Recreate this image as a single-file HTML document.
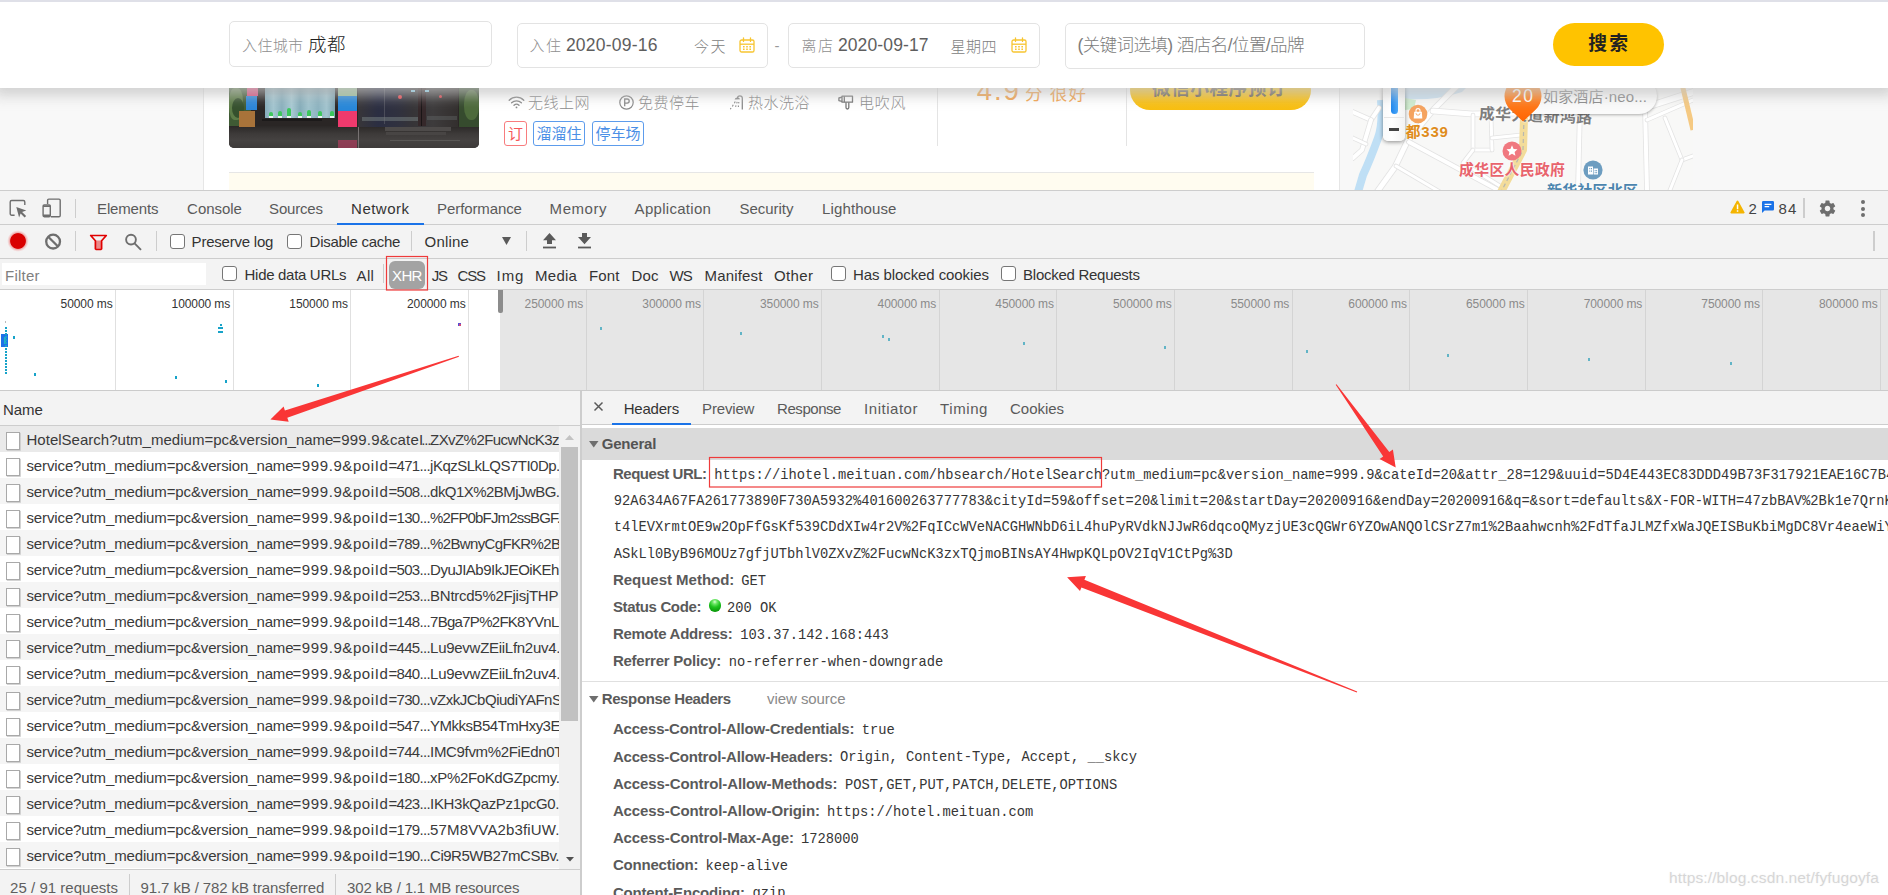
<!DOCTYPE html>
<html lang="zh"><head><meta charset="utf-8"><title>DevTools - Network</title>
<style>
*{margin:0;padding:0;box-sizing:border-box}
html,body{width:1888px;height:895px;overflow:hidden;background:#fff}
body{position:relative;font-family:"Liberation Sans","Noto Sans CJK SC",sans-serif}
.t{position:absolute;white-space:pre;display:block}
.b{position:absolute}
svg{position:absolute;overflow:visible}
.clip{position:absolute;overflow:hidden}
</style></head>
<body>
<!-- p_page -->
<div class="clip" style="left:0;top:0;width:1888px;height:190px;background:#f8f8f8">
<div class="b" style="left:203px;top:88px;width:1137px;height:102px;background:#fff;border-left:1px solid #e6e6e6;border-right:1px solid #e6e6e6"></div>
<div class="b" style="left:229px;top:172px;width:1085px;height:18px;background:#fffcf0;border-top:1px solid #e6e6e6"></div>
<div class="clip" style="left:229px;top:60px;width:250px;height:88px;border-radius:0 0 5px 5px;background:#383433">
<div class="b" style="left:-4px;top:0;width:258px;height:92px;filter:blur(.7px)"><div class="b" style="left:0.0px;top:0.0px;width:258px;height:68px;background:#2a2625;"></div><div class="b" style="left:0.0px;top:66.0px;width:258px;height:26px;background:linear-gradient(#2b2827,#3d3a39 30%,#454241 55%,#3a3736);"></div><div class="b" style="left:0.0px;top:26.0px;width:26px;height:40px;background:#3f5a34;"></div><div class="b" style="left:4.0px;top:28.0px;width:14px;height:32px;background:#5d7c48;border-radius:40%"></div><div class="b" style="left:7.0px;top:38.0px;width:12px;height:20px;background:#35502d;border-radius:50%"></div><div class="b" style="left:22.0px;top:26.0px;width:10.5px;height:9.6px;background:#dc4a7c;"></div><div class="b" style="left:20.7px;top:35.7px;width:11px;height:14.6px;background:#2b85d8;"></div><div class="b" style="left:13.8px;top:50.5px;width:16px;height:16px;background:#a8733a;"></div><div class="b" style="left:40.0px;top:26.0px;width:70.3px;height:32.3px;background:linear-gradient(90deg,#86acba,#a4c6d0 12%,#8ab0bd 24%,#a9cad3 38%,#86adba 50%,#a0c3cd 62%,#8db3c0 76%,#a3c5cf 88%,#7da3b1);"></div><div class="b" style="left:40.0px;top:26.0px;width:70.3px;height:10px;background:linear-gradient(rgba(70,90,100,.35),rgba(70,90,100,0));"></div><div class="b" style="left:44.0px;top:52.0px;width:4.2px;height:4px;background:#3cc75c;border-radius:2px 2px 0 0"></div><div class="b" style="left:44.3px;top:55.8px;width:3.6px;height:2.3px;background:#eef4f2;"></div><div class="b" style="left:53.0px;top:50.5px;width:4.2px;height:5.5px;background:#3cc75c;border-radius:2px 2px 0 0"></div><div class="b" style="left:53.3px;top:55.8px;width:3.6px;height:2.3px;background:#eef4f2;"></div><div class="b" style="left:62.0px;top:48.0px;width:4.2px;height:8px;background:#3cc75c;border-radius:2px 2px 0 0"></div><div class="b" style="left:62.3px;top:55.8px;width:3.6px;height:2.3px;background:#eef4f2;"></div><div class="b" style="left:73.0px;top:52.0px;width:4.2px;height:4px;background:#3cc75c;border-radius:2px 2px 0 0"></div><div class="b" style="left:73.3px;top:55.8px;width:3.6px;height:2.3px;background:#eef4f2;"></div><div class="b" style="left:82.0px;top:49.5px;width:4.2px;height:6.5px;background:#3cc75c;border-radius:2px 2px 0 0"></div><div class="b" style="left:82.3px;top:55.8px;width:3.6px;height:2.3px;background:#eef4f2;"></div><div class="b" style="left:93.0px;top:51.0px;width:4.2px;height:5px;background:#3cc75c;border-radius:2px 2px 0 0"></div><div class="b" style="left:93.3px;top:55.8px;width:3.6px;height:2.3px;background:#eef4f2;"></div><div class="b" style="left:105.0px;top:51.0px;width:4.2px;height:5px;background:#3cc75c;border-radius:2px 2px 0 0"></div><div class="b" style="left:105.3px;top:55.8px;width:3.6px;height:2.3px;background:#eef4f2;"></div><div class="b" style="left:37.0px;top:58.5px;width:60px;height:2.6px;background:#1c1a1a;"></div><div class="b" style="left:113.2px;top:26.0px;width:19.3px;height:10.3px;background:#9dc09a;"></div><div class="b" style="left:113.2px;top:36.3px;width:19.3px;height:15px;background:#2787d9;"></div><div class="b" style="left:113.2px;top:51.3px;width:19.3px;height:15.3px;background:#ef3a6d;"></div><div class="b" style="left:113.2px;top:79.5px;width:19.3px;height:9px;background:rgba(215,60,105,.5);"></div><div class="b" style="left:132.5px;top:26.0px;width:0.8px;height:64px;background:#777272;"></div><div class="b" style="left:133.3px;top:26.0px;width:100px;height:40.5px;background:linear-gradient(90deg,#383639,#2b2e42 20%,#30313f 40%,#363437 55%,#3d3b3c 75%,#332f2e);"></div><div class="b" style="left:137.0px;top:56.5px;width:56px;height:4px;background:rgba(120,130,130,.5);"></div><div class="b" style="left:202.0px;top:56.0px;width:30px;height:4px;background:rgba(110,115,115,.35);"></div><div class="b" style="left:192.8px;top:26.0px;width:8.2px;height:39.5px;background:#35282a;"></div><div class="b" style="left:196.0px;top:26.0px;width:1.2px;height:39.5px;background:#1a1516;"></div><div class="b" style="left:159.0px;top:28.0px;width:1px;height:36px;background:rgba(120,120,125,.4);"></div><div class="b" style="left:186.0px;top:30.2px;width:3.8px;height:1.8px;background:#86d4ee;"></div><div class="b" style="left:199.7px;top:30.2px;width:4.2px;height:1.8px;background:#86d4ee;"></div><div class="b" style="left:172.8px;top:34.5px;width:4.4px;height:4.4px;background:#ea4a50;border-radius:50%"></div><div class="b" style="left:214.0px;top:34.8px;width:3.2px;height:3.2px;background:#dd424c;border-radius:50%"></div><div class="b" style="left:233.5px;top:26.0px;width:25px;height:41px;background:#364b2e;"></div><div class="b" style="left:239.0px;top:30.0px;width:15px;height:30px;background:#4d6a3b;border-radius:45%"></div><div class="b" style="left:159.8px;top:66.5px;width:66px;height:4.5px;background:#4e4b4a;"></div><div class="b" style="left:161.0px;top:72.0px;width:60px;height:3px;background:#484544;"></div><div class="b" style="left:165.0px;top:80.0px;width:70px;height:1px;background:rgba(110,108,106,.5);"></div></div>
</div>
<svg style="left:508px;top:95px" width="17" height="14" viewBox="0 0 17 14" fill="none" stroke="#8a8a8a" stroke-width="1.3" stroke-linecap="round"><path d="M1.2 5.2a10.3 10.3 0 0 1 14.6 0"/><path d="M3.6 7.8a7 7 0 0 1 9.8 0"/><path d="M6 10.3a3.6 3.6 0 0 1 5 0"/><circle cx="8.5" cy="12.4" r=".9" fill="#8a8a8a" stroke="none"/></svg>
<span class="t" style="left:528.1px;top:95.3px;font:300 15px/1 'Liberation Sans','Noto Sans CJK SC',sans-serif;color:#8c8c8c;letter-spacing:0.448px;">无线上网</span>
<svg style="left:619px;top:95px" width="15" height="15" viewBox="0 0 15 15" fill="none" stroke="#8a8a8a" stroke-width="1.2"><circle cx="7.5" cy="7.5" r="6.7"/><path d="M5.7 11.2V4h2.4a2.1 2.1 0 0 1 0 4.2H5.7" stroke-width="1.3"/></svg>
<span class="t" style="left:638.1px;top:95.3px;font:300 15px/1 'Liberation Sans','Noto Sans CJK SC',sans-serif;color:#8c8c8c;letter-spacing:0.448px;">免费停车</span>
<svg style="left:729px;top:95px" width="15" height="15" viewBox="0 0 15 15" fill="none" stroke="#8a8a8a" stroke-width="1.3"><path d="M13.3 14.5V3.2a2.4 2.4 0 0 0-4.8 0"/><path d="M5.6 4.6a3 3 0 0 1 5.6-.4z" fill="#8a8a8a" stroke="none"/><path d="M6.2 6.6l-.8 1.6M4.2 9.8l-.8 1.6M2 13l-.6 1.2M8.2 6.8l-.5 1.6M7 10.4l-.4 1.5M9.8 7l-.1 1.4M9.4 10.6V12" stroke-width="1.1"/></svg>
<span class="t" style="left:748.1px;top:95.3px;font:300 15px/1 'Liberation Sans','Noto Sans CJK SC',sans-serif;color:#8c8c8c;letter-spacing:0.448px;">热水洗浴</span>
<svg style="left:838px;top:95px" width="16" height="15" viewBox="0 0 16 15" fill="none" stroke="#777" stroke-width="1.3" stroke-linejoin="round"><path d="M4 1.2h10.5v6H4z"/><path d="M4 2.2L.9 3v2.6L4 6.4"/><path d="M8 7.2v5.4a1.4 1.4 0 0 0 2.8 0V7.2"/><path d="M6.3 1.2v6"/></svg>
<span class="t" style="left:859.1px;top:95.3px;font:300 15px/1 'Liberation Sans','Noto Sans CJK SC',sans-serif;color:#8c8c8c;letter-spacing:0.672px;">电吹风</span>
<div class="b" style="left:504px;top:121px;width:23px;height:25px;border:1px solid #f87c7e;border-radius:3px"></div>
<span class="t" style="left:508.0px;top:126.3px;font:400 15px/1 'Liberation Sans','Noto Sans CJK SC',sans-serif;color:#f6575a;letter-spacing:0.044px;">订</span>
<div class="b" style="left:533px;top:121px;width:52px;height:25px;border:1px solid #5d9cec;border-radius:3px"></div>
<span class="t" style="left:536.5px;top:126.3px;font:400 15px/1 'Liberation Sans','Noto Sans CJK SC',sans-serif;color:#4b8fe6;letter-spacing:0.022px;">溜溜住</span>
<div class="b" style="left:592px;top:121px;width:52px;height:25px;border:1px solid #5d9cec;border-radius:3px"></div>
<span class="t" style="left:595.5px;top:126.3px;font:400 15px/1 'Liberation Sans','Noto Sans CJK SC',sans-serif;color:#4b8fe6;letter-spacing:0.022px;">停车场</span>
<div class="b" style="left:937px;top:88px;width:1px;height:58px;background:#e4e4e4"></div>
<div class="b" style="left:1126px;top:88px;width:1px;height:58px;background:#e4e4e4"></div>
<span class="t" style="left:976.8px;top:77.2px;font:400 27.5px/1 'Liberation Sans','Noto Sans CJK SC',sans-serif;color:#f3a24a;letter-spacing:1.838px;">4.9</span>
<span class="t" style="left:1024.9px;top:86.2px;font:400 17.5px/1 'Liberation Sans','Noto Sans CJK SC',sans-serif;color:#f3a24a;letter-spacing:1.265px;">分 很好</span>
<div class="b" style="left:1130px;top:70px;width:181px;height:40px;border-radius:20px;background:linear-gradient(#fdd23a,#f9c21a 60%,#f8be10)"></div>
<span class="t" style="left:1151.8px;top:80.1px;font:700 18.75px/1 'Liberation Sans','Noto Sans CJK SC',sans-serif;color:#6a6052;letter-spacing:0.429px;">微信小程序预订</span>
<div class="clip" style="left:1353px;top:60px;width:340px;height:130px;background:#f8f8f7">
<svg style="left:0;top:0" width="340" height="130" viewBox="1353 60 340 130">
<path d="M1404 84 L1470 84 L1462 92 Q1435 101 1404 99z" fill="#cbe1f1"/><path d="M1405 98l11 2-2 9-9 1z" fill="#cfeccf"/><path d="M1381 100 Q1383 125 1378 138 Q1370 160 1363 175 L1358 192" fill="none" stroke="#bfdff5" stroke-width="8"/><path d="M1353 112L1371 120L1379 108" fill="none" stroke="#e3e3e3" stroke-width="5.6" stroke-linecap="round" stroke-linejoin="round"/><path d="M1353 112L1371 120L1379 108" fill="none" stroke="#fff" stroke-width="4" stroke-linecap="round" stroke-linejoin="round"/><path d="M1371 120L1362 150L1353 158" fill="none" stroke="#e3e3e3" stroke-width="5.6" stroke-linecap="round" stroke-linejoin="round"/><path d="M1371 120L1362 150L1353 158" fill="none" stroke="#fff" stroke-width="4" stroke-linecap="round" stroke-linejoin="round"/><path d="M1353 138L1366 144" fill="none" stroke="#e3e3e3" stroke-width="4.6" stroke-linecap="round" stroke-linejoin="round"/><path d="M1353 138L1366 144" fill="none" stroke="#fff" stroke-width="3" stroke-linecap="round" stroke-linejoin="round"/><path d="M1457 86L1433 110L1407 142L1395 167L1377 192" fill="none" stroke="#e3e3e3" stroke-width="6.6" stroke-linecap="round" stroke-linejoin="round"/><path d="M1457 86L1433 110L1407 142L1395 167L1377 192" fill="none" stroke="#fff" stroke-width="5" stroke-linecap="round" stroke-linejoin="round"/><path d="M1433 111L1472 114L1520 113" fill="none" stroke="#e3e3e3" stroke-width="6.6" stroke-linecap="round" stroke-linejoin="round"/><path d="M1433 111L1472 114L1520 113" fill="none" stroke="#fff" stroke-width="5" stroke-linecap="round" stroke-linejoin="round"/><path d="M1409 142L1498 190" fill="none" stroke="#e3e3e3" stroke-width="5.6" stroke-linecap="round" stroke-linejoin="round"/><path d="M1409 142L1498 190" fill="none" stroke="#fff" stroke-width="4" stroke-linecap="round" stroke-linejoin="round"/><path d="M1396 166L1440 192" fill="none" stroke="#e3e3e3" stroke-width="4.6" stroke-linecap="round" stroke-linejoin="round"/><path d="M1396 166L1440 192" fill="none" stroke="#fff" stroke-width="3" stroke-linecap="round" stroke-linejoin="round"/><path d="M1473 115L1473 150L1492 150" fill="none" stroke="#e3e3e3" stroke-width="4.6" stroke-linecap="round" stroke-linejoin="round"/><path d="M1473 115L1473 150L1492 150" fill="none" stroke="#fff" stroke-width="3" stroke-linecap="round" stroke-linejoin="round"/><path d="M1491 115L1492 150" fill="none" stroke="#e3e3e3" stroke-width="4.6" stroke-linecap="round" stroke-linejoin="round"/><path d="M1491 115L1492 150" fill="none" stroke="#fff" stroke-width="3" stroke-linecap="round" stroke-linejoin="round"/><path d="M1492 138L1521 135" fill="none" stroke="#e3e3e3" stroke-width="4.6" stroke-linecap="round" stroke-linejoin="round"/><path d="M1492 138L1521 135" fill="none" stroke="#fff" stroke-width="3" stroke-linecap="round" stroke-linejoin="round"/><path d="M1473 150L1463 163L1500 186" fill="none" stroke="#e3e3e3" stroke-width="4.6" stroke-linecap="round" stroke-linejoin="round"/><path d="M1473 150L1463 163L1500 186" fill="none" stroke="#fff" stroke-width="3" stroke-linecap="round" stroke-linejoin="round"/><path d="M1524 112L1580 109L1650 106L1693 92" fill="none" stroke="#e3e3e3" stroke-width="7.6" stroke-linecap="round" stroke-linejoin="round"/><path d="M1524 112L1580 109L1650 106L1693 92" fill="none" stroke="#fff" stroke-width="6" stroke-linecap="round" stroke-linejoin="round"/><path d="M1580 108L1578 190" fill="none" stroke="#e3e3e3" stroke-width="5.6" stroke-linecap="round" stroke-linejoin="round"/><path d="M1580 108L1578 190" fill="none" stroke="#fff" stroke-width="4" stroke-linecap="round" stroke-linejoin="round"/><path d="M1645 108L1647 190" fill="none" stroke="#e3e3e3" stroke-width="5.6" stroke-linecap="round" stroke-linejoin="round"/><path d="M1645 108L1647 190" fill="none" stroke="#fff" stroke-width="4" stroke-linecap="round" stroke-linejoin="round"/><path d="M1647 120L1693 100" fill="none" stroke="#e3e3e3" stroke-width="4.6" stroke-linecap="round" stroke-linejoin="round"/><path d="M1647 120L1693 100" fill="none" stroke="#fff" stroke-width="3" stroke-linecap="round" stroke-linejoin="round"/><path d="M1665 118L1682 160L1693 156" fill="none" stroke="#e3e3e3" stroke-width="4.6" stroke-linecap="round" stroke-linejoin="round"/><path d="M1665 118L1682 160L1693 156" fill="none" stroke="#fff" stroke-width="3" stroke-linecap="round" stroke-linejoin="round"/><path d="M1682 160L1670 190" fill="none" stroke="#e3e3e3" stroke-width="4.6" stroke-linecap="round" stroke-linejoin="round"/><path d="M1682 160L1670 190" fill="none" stroke="#fff" stroke-width="3" stroke-linecap="round" stroke-linejoin="round"/><path d="M1600 88L1592 108" fill="none" stroke="#e3e3e3" stroke-width="4.6" stroke-linecap="round" stroke-linejoin="round"/><path d="M1600 88L1592 108" fill="none" stroke="#fff" stroke-width="3" stroke-linecap="round" stroke-linejoin="round"/><path d="M1682 84L1693 130" fill="none" stroke="#f5c982" stroke-width="5"/><path d="M1524 118L1523 150L1501 192" fill="none" stroke="#f3dc9a" stroke-width="8" stroke-linejoin="round"/><path d="M1524 118L1523 150L1501 192" fill="none" stroke="#b8b8b0" stroke-width="1.2" stroke-dasharray="4 3" stroke-linejoin="round"/>
</svg>
</div>
<span class="t" style="left:1479.0px;top:106.1px;font:700 15.8px/1 'Liberation Sans','Noto Sans CJK SC',sans-serif;color:#7d7d7d;letter-spacing:0.394px;transform:rotate(2.2deg);transform-origin:0 50%;text-shadow:0 0 2px #fff,0 0 2px #fff;">成华大道新鸿路</span>
<div class="b" style="left:1383px;top:60px;width:22px;height:81px;background:linear-gradient(90deg,#fafafa,#fff 40%,#f3f3f3);border-radius:0 0 5px 5px;box-shadow:0 1px 4px rgba(0,0,0,.45)"></div>
<div class="b" style="left:1390.5px;top:60px;width:7.5px;height:53.5px;background:linear-gradient(90deg,#1d86ee,#4aa6f7);border-radius:0 0 4px 4px"></div>
<div class="b" style="left:1384px;top:117px;width:20px;height:1px;background:#e6e6e6"></div>
<div class="b" style="left:1389px;top:127.5px;width:10px;height:3px;background:#444"></div>
<svg style="left:1408px;top:104px" width="20" height="20" viewBox="0 0 20 20"><circle cx="10" cy="10" r="9.3" fill="#f5a35f"/><path d="M6.2 7.8h7.6l.5 6.6H5.7z" fill="#fff"/><path d="M8 8V6.6a2 2 0 0 1 4 0V8" fill="none" stroke="#fff" stroke-width="1.1"/><path d="M8 9.2a2 2 0 0 0 4 0" fill="none" stroke="#f5a35f" stroke-width=".9"/></svg>
<span class="t" style="left:1405.6px;top:124.3px;font:700 15px/1 'Liberation Sans','Noto Sans CJK SC',sans-serif;color:#df8c1c;letter-spacing:0.776px;text-shadow:0 0 2px #fff;">都339</span>
<div class="b" style="left:1520px;top:78px;width:137px;height:36px;background:#fafafa;border-radius:0 18px 18px 0;box-shadow:0 1px 3px rgba(0,0,0,.3)"></div>
<span class="t" style="left:1543.1px;top:89.3px;font:400 15px/1 'Liberation Sans','Noto Sans CJK SC',sans-serif;color:#8a8a8a;letter-spacing:0.133px;">如家酒店·neo...</span>
<div class="b" style="left:1503px;top:76px;width:40px;height:47px;background:linear-gradient(#ff9a3c,#ff6200);clip-path:path('M20 45.600L7.200 33.400A18.500 18.500 0 1 1 32.800 33.400z')"></div>
<span class="t" style="left:1511.9px;top:87.7px;font:400 17.5px/1 'Liberation Sans','Noto Sans CJK SC',sans-serif;color:#fff;letter-spacing:1.701px;">20</span>
<svg style="left:1502px;top:141px" width="20" height="20" viewBox="0 0 20 20"><circle cx="10" cy="10" r="9.5" fill="#f0787f"/><path d="M10 4.3l1.6 3.6 3.9.4-2.9 2.6.8 3.8L10 12.800 6.600 14.700l.8-3.800L4.500 8.300l3.900-.4z" fill="#fff"/></svg>
<span class="t" style="left:1459.1px;top:162.5px;font:700 14.8px/1 'Liberation Sans','Noto Sans CJK SC',sans-serif;color:#e8646d;letter-spacing:0.374px;text-shadow:0 0 2px #fff,0 0 2px #fff;">成华区人民政府</span>
<svg style="left:1583px;top:160px" width="20" height="20" viewBox="0 0 20 20"><circle cx="10" cy="10" r="9.600" fill="#6d9dc0"/><path d="M5 14.500V6.500h5v8zM10.600 14.500V8.500h4.400v6z" fill="#fff"/><path d="M6.300 8h1v1.300h-1zM8 8h1v1.300H8zM6.300 10.400h1v1.300h-1zM8 10.400h1v1.300H8zM11.700 10h.9v1.200h-.9zM13.200 10h.9v1.200h-.9zM11.700 12h.9v1.200h-.9zM13.200 12h.9v1.200h-.9z" fill="#6d9dc0"/></svg>
<span class="t" style="left:1547.1px;top:182.8px;font:700 15px/1 'Liberation Sans','Noto Sans CJK SC',sans-serif;color:#4b85ae;letter-spacing:0.169px;text-shadow:0 0 2px #fff;">新华社区北区</span>
</div>
<div class="b" style="left:0px;top:0px;width:1888px;height:88px;background:#fff;box-shadow:0 2px 12px 6px rgba(195,195,195,.7)"></div>
<div class="b" style="left:0px;top:0px;width:1888px;height:2px;background:#dfe0e8"></div>
<div class="b" style="left:229px;top:21px;width:263px;height:46px;border:1px solid #e3e3e3;border-radius:5px;background:#fff"></div>
<div class="b" style="left:517px;top:23px;width:251px;height:45px;border:1px solid #e3e3e3;border-radius:5px;background:#fff"></div>
<div class="b" style="left:788px;top:23px;width:252px;height:45px;border:1px solid #e3e3e3;border-radius:5px;background:#fff"></div>
<div class="b" style="left:1065px;top:23px;width:300px;height:46px;border:1px solid #e3e3e3;border-radius:5px;background:#fff"></div>
<span class="t" style="left:242.1px;top:37.9px;font:300 15px/1 'Liberation Sans','Noto Sans CJK SC',sans-serif;color:#8f8f8f;letter-spacing:0.315px;">入住城市</span>
<span class="t" style="left:308.0px;top:36.4px;font:300 18.4px/1 'Liberation Sans','Noto Sans CJK SC',sans-serif;color:#1e1e1e;letter-spacing:0.485px;">成都</span>
<span class="t" style="left:529.6px;top:38.1px;font:300 15px/1 'Liberation Sans','Noto Sans CJK SC',sans-serif;color:#8f8f8f;letter-spacing:1.344px;">入住</span>
<span class="t" style="left:565.9px;top:36.7px;font:400 17.5px/1 'Liberation Sans','Noto Sans CJK SC',sans-serif;color:#5e5e5e;letter-spacing:0.238px;">2020-09-16</span>
<span class="t" style="left:694.1px;top:39.3px;font:300 15px/1 'Liberation Sans','Noto Sans CJK SC',sans-serif;color:#808080;letter-spacing:1.344px;">今天</span>
<span class="t" style="left:774.6px;top:38.3px;font:400 15px/1 'Liberation Sans','Noto Sans CJK SC',sans-serif;color:#999;letter-spacing:2.360px;">-</span>
<span class="t" style="left:801.6px;top:38.1px;font:300 15px/1 'Liberation Sans','Noto Sans CJK SC',sans-serif;color:#8f8f8f;letter-spacing:1.344px;">离店</span>
<span class="t" style="left:837.9px;top:36.7px;font:400 17.5px/1 'Liberation Sans','Noto Sans CJK SC',sans-serif;color:#5e5e5e;letter-spacing:0.127px;">2020-09-17</span>
<span class="t" style="left:950.6px;top:39.3px;font:300 15px/1 'Liberation Sans','Noto Sans CJK SC',sans-serif;color:#808080;letter-spacing:0.422px;">星期四</span>
<span class="t" style="left:1077.4px;top:37.2px;font:300 17.5px/1 'Liberation Sans','Noto Sans CJK SC',sans-serif;color:#7c7c7c;letter-spacing:-0.568px;">(关键词选填) 酒店名/位置/品牌</span>
<svg style="left:739px;top:37px" width="16" height="16" viewBox="0 0 16 16" fill="none" stroke="#f7c531" stroke-width="1.3"><rect x="1" y="3" width="14" height="12" rx="1.6"/><path d="M1 7.200h14" /><path d="M4.500 .8v3.600M11.500 .8v3.600" stroke-linecap="round"/><path d="M4 9.800h1.600M7.200 9.800h1.600M10.400 9.800h1.600M4 12.300h1.600M7.200 12.300h1.600M10.400 12.300h1.600" stroke-width="1.400"/></svg>
<svg style="left:1011px;top:37px" width="16" height="16" viewBox="0 0 16 16" fill="none" stroke="#f7c531" stroke-width="1.3"><rect x="1" y="3" width="14" height="12" rx="1.6"/><path d="M1 7.200h14" /><path d="M4.500 .8v3.600M11.500 .8v3.600" stroke-linecap="round"/><path d="M4 9.800h1.600M7.200 9.800h1.600M10.400 9.800h1.600M4 12.300h1.600M7.200 12.300h1.600M10.400 12.300h1.600" stroke-width="1.400"/></svg>
<div class="b" style="left:1553px;top:23px;width:111px;height:43px;background:#ffc300;border-radius:22px"></div>
<span class="t" style="left:1588.3px;top:34.6px;font:700 18.75px/1 'Liberation Sans','Noto Sans CJK SC',sans-serif;color:#222;letter-spacing:2.325px;">搜索</span>
<!-- p_toolbar -->
<div class="b" style="left:0px;top:190px;width:1888px;height:100px;background:#f3f3f3"></div>
<div class="b" style="left:0px;top:190px;width:1888px;height:1px;background:#cdcdcd"></div>
<div class="b" style="left:0px;top:224px;width:1888px;height:1px;background:#cdcdcd"></div>
<div class="b" style="left:0px;top:258px;width:1888px;height:1px;background:#cdcdcd"></div>
<div class="b" style="left:0px;top:289px;width:1888px;height:1px;background:#cdcdcd"></div>
<svg style="left:9px;top:199px" width="19" height="19" viewBox="9 199 19 19" fill="none" stroke="#6e6e6e" stroke-width="1.400"><path d="M14.600 215.300H11.700a1.500 1.500 0 0 1-1.500-1.500v-11.800a1.500 1.500 0 0 1 1.500-1.500h11.600a1.500 1.500 0 0 1 1.500 1.500v3.100"/><path d="M16.300 206.900l10 3.500-4.200 1.500 4 4-1.500 1.500-4-4-1.500 4.200z" fill="#6e6e6e" stroke="none"/></svg>
<svg style="left:42px;top:198px" width="20" height="20" viewBox="42 198 20 20" fill="none" stroke="#6e6e6e" stroke-width="1.400"><path d="M47.600 204V200.300a1.200 1.200 0 0 1 1.200-1.200h10.200a1.200 1.200 0 0 1 1.200 1.200v15.200a1.200 1.200 0 0 1-1.200 1.200h-8.200"/><rect x="43.100" y="204.900" width="7.200" height="11.800" rx="1.100"/><path d="M43.100 206.200h7.200M43.100 215.400h7.200" stroke-width="1.800"/></svg>
<div class="b" style="left:75px;top:199px;width:1px;height:19px;background:#cdcdcd"></div>
<span class="t" style="left:97.1px;top:201.3px;font:400 15px/1 'Liberation Sans','Noto Sans CJK SC',sans-serif;color:#5a5a5a;letter-spacing:-0.167px;">Elements</span>
<span class="t" style="left:187.1px;top:201.3px;font:400 15px/1 'Liberation Sans','Noto Sans CJK SC',sans-serif;color:#5a5a5a;letter-spacing:-0.031px;">Console</span>
<span class="t" style="left:269.1px;top:201.3px;font:400 15px/1 'Liberation Sans','Noto Sans CJK SC',sans-serif;color:#5a5a5a;letter-spacing:-0.195px;">Sources</span>
<span class="t" style="left:351.1px;top:201.3px;font:400 15px/1 'Liberation Sans','Noto Sans CJK SC',sans-serif;color:#333;letter-spacing:0.474px;">Network</span>
<span class="t" style="left:437.1px;top:201.3px;font:400 15px/1 'Liberation Sans','Noto Sans CJK SC',sans-serif;color:#5a5a5a;letter-spacing:-0.102px;">Performance</span>
<span class="t" style="left:549.6px;top:201.3px;font:400 15px/1 'Liberation Sans','Noto Sans CJK SC',sans-serif;color:#5a5a5a;letter-spacing:0.538px;">Memory</span>
<span class="t" style="left:634.6px;top:201.3px;font:400 15px/1 'Liberation Sans','Noto Sans CJK SC',sans-serif;color:#5a5a5a;letter-spacing:0.297px;">Application</span>
<span class="t" style="left:739.6px;top:201.3px;font:400 15px/1 'Liberation Sans','Noto Sans CJK SC',sans-serif;color:#5a5a5a;letter-spacing:-0.047px;">Security</span>
<span class="t" style="left:822.1px;top:201.3px;font:400 15px/1 'Liberation Sans','Noto Sans CJK SC',sans-serif;color:#5a5a5a;letter-spacing:0.106px;">Lighthouse</span>
<div class="b" style="left:337px;top:223px;width:87px;height:2px;background:#1a73e8"></div>
<svg style="left:1730px;top:200px" width="15" height="14" viewBox="0 0 15 14"><path d="M7.500 .6a.9.900 0 0 1 .8.450l6.200 11.100a.9.900 0 0 1-.8 1.350H1.300a.9.900 0 0 1-.8-1.350L6.700 1.050A.9.900 0 0 1 7.500.6z" fill="#f4b400"/><path d="M6.800 4.400h1.500v4.800H6.800zM6.800 10.300h1.500v1.500H6.800z" fill="#fff"/></svg>
<span class="t" style="left:1748.6px;top:201.3px;font:400 15px/1 'Liberation Sans','Noto Sans CJK SC',sans-serif;color:#444;letter-spacing:0.516px;">2</span>
<svg style="left:1762px;top:201px" width="12" height="12" viewBox="0 0 12 12"><path d="M1.600 0h9.200A1.200 1.200 0 0 1 12 1.200v7a1.200 1.200 0 0 1-1.200 1.200H2.600L0 12V1.200A1.200 1.200 0 0 1 1.200 0z" fill="#1a73e8"/><path d="M2.600 2.700h6.800v1.200H2.600zM2.600 5h4.600v1.200H2.600z" fill="#fff"/></svg>
<span class="t" style="left:1778.6px;top:201.3px;font:400 15px/1 'Liberation Sans','Noto Sans CJK SC',sans-serif;color:#444;letter-spacing:1.172px;">84</span>
<div class="b" style="left:1803px;top:198px;width:2px;height:20px;background:#cdcdcd"></div>
<svg style="left:1818px;top:199px" width="19" height="19" viewBox="0 0 24 24"><path fill="#6e6e6e" d="M19.430 12.980c.040-.320.070-.640.070-.980s-.030-.660-.070-.980l2.110-1.650c.190-.150.240-.420.120-.640l-2-3.460c-.120-.220-.390-.300-.610-.220l-2.490 1c-.520-.400-1.080-.730-1.690-.980l-.380-2.650A.488.488 0 0 0 14 2h-4c-.250 0-.460.180-.490.420l-.380 2.650c-.610.250-1.170.590-1.690.980l-2.490-1c-.230-.090-.490 0-.610.220l-2 3.460c-.130.220-.070.490.120.640l2.110 1.650c-.040.320-.070.650-.070.980s.030.660.070.980l-2.110 1.650c-.190.150-.240.420-.120.640l2 3.460c.120.220.390.300.610.220l2.490-1c.520.400 1.080.730 1.690.980l.380 2.650c.030.240.240.420.490.420h4c.250 0 .460-.180.490-.420l.380-2.650c.610-.250 1.170-.590 1.690-.980l2.490 1c.230.090.490 0 .610-.220l2-3.460c.120-.220.070-.490-.120-.640l-2.110-1.650zM12 15.500c-1.930 0-3.500-1.570-3.500-3.500s1.570-3.500 3.500-3.500 3.500 1.570 3.500 3.500-1.570 3.500-3.500 3.500z"/></svg>
<div class="b" style="left:1861px;top:200.4px;width:4px;height:4px;background:#6e6e6e;border-radius:50%"></div>
<div class="b" style="left:1861px;top:206.5px;width:4px;height:4px;background:#6e6e6e;border-radius:50%"></div>
<div class="b" style="left:1861px;top:212.6px;width:4px;height:4px;background:#6e6e6e;border-radius:50%"></div>
<div class="b" style="left:6.5px;top:230.2px;width:22px;height:22px;border-radius:50%;background:radial-gradient(circle,#d90000 0,#d90000 7.400px,rgba(235,60,60,.4) 8.300px,rgba(240,90,90,.18) 9.600px,rgba(240,90,90,0) 10.800px)"></div>
<svg style="left:44px;top:232px" width="19" height="19" viewBox="44 232 19 19" fill="none" stroke="#6e6e6e" stroke-width="2.300"><circle cx="53.100" cy="241.600" r="6.900"/><path d="M48.200 236.700l9.800 9.800"/></svg>
<div class="b" style="left:75px;top:231px;width:1px;height:20px;background:#cdcdcd"></div>
<svg style="left:89px;top:234px" width="19" height="17" viewBox="89 234 19 17"><path d="M95.400 240.600h6.200v8.200l-1 .6h-4.200l-1-.6z" fill="#ea8a8a"/><path d="M90.700 235.500h15.600l-4.700 5.300v8l-1 .7h-4.200l-1-.7v-8z" fill="none" stroke="#e00000" stroke-width="1.700" stroke-linejoin="round"/></svg>
<svg style="left:124px;top:233px" width="19" height="19" viewBox="124 233 19 19" fill="none" stroke="#6e6e6e" stroke-width="1.900"><circle cx="131" cy="239.600" r="4.900"/><path d="M134.600 243.300l6.400 6.600"/></svg>
<div class="b" style="left:156px;top:231px;width:1px;height:20px;background:#cdcdcd"></div>
<div class="b" style="left:170px;top:234px;width:15px;height:15px;background:#fff;border:1.300px solid #767676;border-radius:3px"></div>
<span class="t" style="left:191.6px;top:233.8px;font:400 15px/1 'Liberation Sans','Noto Sans CJK SC',sans-serif;color:#333;letter-spacing:-0.214px;">Preserve log</span>
<div class="b" style="left:287px;top:234px;width:15px;height:15px;background:#fff;border:1.300px solid #767676;border-radius:3px"></div>
<span class="t" style="left:309.6px;top:233.8px;font:400 15px/1 'Liberation Sans','Noto Sans CJK SC',sans-serif;color:#333;letter-spacing:-0.280px;">Disable cache</span>
<div class="b" style="left:411px;top:231px;width:1px;height:20px;background:#cdcdcd"></div>
<span class="t" style="left:424.6px;top:233.8px;font:400 15px/1 'Liberation Sans','Noto Sans CJK SC',sans-serif;color:#333;letter-spacing:0.200px;">Online</span>
<svg style="left:502px;top:237px" width="9" height="8" viewBox="0 0 9 8"><path d="M0 0h9L4.500 8z" fill="#5a5a5a"/></svg>
<div class="b" style="left:526px;top:231px;width:1px;height:20px;background:#cdcdcd"></div>
<svg style="left:543px;top:233px" width="13" height="16" viewBox="0 0 13 16" fill="#5a5a5a"><path d="M6.500 0L13 7.200H9V11H4V7.200H0z"/><path d="M0 13.600h13v1.800H0z"/></svg>
<svg style="left:578px;top:233px" width="13" height="16" viewBox="0 0 13 16" fill="#5a5a5a"><path d="M6.500 11.200L13 4H9V0H4v4H0z"/><path d="M0 13.600h13v1.800H0z"/></svg>
<div class="b" style="left:1873px;top:231px;width:2px;height:20px;background:#cdcdcd"></div>
<div class="b" style="left:2px;top:263px;width:204px;height:22px;background:#fff"></div>
<span class="t" style="left:5.1px;top:267.6px;font:400 15px/1 'Liberation Sans','Noto Sans CJK SC',sans-serif;color:#808080;letter-spacing:0.203px;">Filter</span>
<div class="b" style="left:222px;top:266px;width:15px;height:15px;background:#fff;border:1.300px solid #767676;border-radius:3px"></div>
<span class="t" style="left:244.6px;top:266.9px;font:400 15px/1 'Liberation Sans','Noto Sans CJK SC',sans-serif;color:#333;letter-spacing:-0.310px;">Hide data URLs</span>
<span class="t" style="left:356.6px;top:267.6px;font:400 15px/1 'Liberation Sans','Noto Sans CJK SC',sans-serif;color:#333;letter-spacing:0.344px;">All</span>
<div class="b" style="left:383px;top:264px;width:1px;height:19px;background:#cdcdcd"></div>
<div class="b" style="left:389px;top:261px;width:36px;height:27.5px;background:#a3a3a3;border-radius:6px"></div>
<span class="t" style="left:392.1px;top:267.6px;font:400 15px/1 'Liberation Sans','Noto Sans CJK SC',sans-serif;color:#fff;letter-spacing:-0.656px;">XHR</span>
<span class="t" style="left:431.7px;top:267.6px;font:400 15px/1 'Liberation Sans','Noto Sans CJK SC',sans-serif;color:#333;letter-spacing:-1.125px;">JS</span>
<span class="t" style="left:457.5px;top:267.6px;font:400 15px/1 'Liberation Sans','Noto Sans CJK SC',sans-serif;color:#333;letter-spacing:-1.125px;">CSS</span>
<span class="t" style="left:496.6px;top:267.6px;font:400 15px/1 'Liberation Sans','Noto Sans CJK SC',sans-serif;color:#333;letter-spacing:0.922px;">Img</span>
<span class="t" style="left:535.1px;top:267.6px;font:400 15px/1 'Liberation Sans','Noto Sans CJK SC',sans-serif;color:#333;letter-spacing:0.250px;">Media</span>
<span class="t" style="left:589.1px;top:267.6px;font:400 15px/1 'Liberation Sans','Noto Sans CJK SC',sans-serif;color:#333;letter-spacing:0.115px;">Font</span>
<span class="t" style="left:631.6px;top:267.6px;font:400 15px/1 'Liberation Sans','Noto Sans CJK SC',sans-serif;color:#333;letter-spacing:0.086px;">Doc</span>
<span class="t" style="left:669.6px;top:267.6px;font:400 15px/1 'Liberation Sans','Noto Sans CJK SC',sans-serif;color:#333;letter-spacing:-1.125px;">WS</span>
<span class="t" style="left:704.6px;top:267.6px;font:400 15px/1 'Liberation Sans','Noto Sans CJK SC',sans-serif;color:#333;letter-spacing:0.165px;">Manifest</span>
<span class="t" style="left:774.1px;top:267.6px;font:400 15px/1 'Liberation Sans','Noto Sans CJK SC',sans-serif;color:#333;letter-spacing:0.336px;">Other</span>
<div class="b" style="left:831px;top:266px;width:15px;height:15px;background:#fff;border:1.300px solid #767676;border-radius:3px"></div>
<span class="t" style="left:853.1px;top:266.9px;font:400 15px/1 'Liberation Sans','Noto Sans CJK SC',sans-serif;color:#333;letter-spacing:-0.095px;">Has blocked cookies</span>
<div class="b" style="left:1001px;top:266px;width:15px;height:15px;background:#fff;border:1.300px solid #767676;border-radius:3px"></div>
<span class="t" style="left:1023.1px;top:266.9px;font:400 15px/1 'Liberation Sans','Noto Sans CJK SC',sans-serif;color:#333;letter-spacing:-0.270px;">Blocked Requests</span>
<!-- p_overview -->
<div class="b" style="left:0px;top:290px;width:1888px;height:100px;background:#fff"></div>
<div class="b" style="left:500px;top:290px;width:1388px;height:100px;background:#e6e6e6"></div>
<div class="b" style="left:115px;top:290px;width:1px;height:100px;background:#e0e0e0"></div>
<span class="t" style="left:60.6px;top:298.1px;font:400 12px/1 'Liberation Sans','Noto Sans CJK SC',sans-serif;color:#333;letter-spacing:-0.088px;">50000 ms</span>
<div class="b" style="left:233px;top:290px;width:1px;height:100px;background:#e0e0e0"></div>
<span class="t" style="left:171.6px;top:298.1px;font:400 12px/1 'Liberation Sans','Noto Sans CJK SC',sans-serif;color:#333;letter-spacing:-0.086px;">100000 ms</span>
<div class="b" style="left:350px;top:290px;width:1px;height:100px;background:#e0e0e0"></div>
<span class="t" style="left:289.3px;top:298.1px;font:400 12px/1 'Liberation Sans','Noto Sans CJK SC',sans-serif;color:#333;letter-spacing:-0.086px;">150000 ms</span>
<div class="b" style="left:468px;top:290px;width:1px;height:100px;background:#e0e0e0"></div>
<span class="t" style="left:407.0px;top:298.1px;font:400 12px/1 'Liberation Sans','Noto Sans CJK SC',sans-serif;color:#333;letter-spacing:-0.086px;">200000 ms</span>
<div class="b" style="left:586px;top:290px;width:1px;height:100px;background:#d4d4d4"></div>
<span class="t" style="left:524.6px;top:298.1px;font:400 12px/1 'Liberation Sans','Noto Sans CJK SC',sans-serif;color:#8a8a8a;letter-spacing:-0.086px;">250000 ms</span>
<div class="b" style="left:703px;top:290px;width:1px;height:100px;background:#d4d4d4"></div>
<span class="t" style="left:642.3px;top:298.1px;font:400 12px/1 'Liberation Sans','Noto Sans CJK SC',sans-serif;color:#8a8a8a;letter-spacing:-0.086px;">300000 ms</span>
<div class="b" style="left:821px;top:290px;width:1px;height:100px;background:#d4d4d4"></div>
<span class="t" style="left:760.0px;top:298.1px;font:400 12px/1 'Liberation Sans','Noto Sans CJK SC',sans-serif;color:#8a8a8a;letter-spacing:-0.086px;">350000 ms</span>
<div class="b" style="left:939px;top:290px;width:1px;height:100px;background:#d4d4d4"></div>
<span class="t" style="left:877.6px;top:298.1px;font:400 12px/1 'Liberation Sans','Noto Sans CJK SC',sans-serif;color:#8a8a8a;letter-spacing:-0.086px;">400000 ms</span>
<div class="b" style="left:1056px;top:290px;width:1px;height:100px;background:#d4d4d4"></div>
<span class="t" style="left:995.3px;top:298.1px;font:400 12px/1 'Liberation Sans','Noto Sans CJK SC',sans-serif;color:#8a8a8a;letter-spacing:-0.086px;">450000 ms</span>
<div class="b" style="left:1174px;top:290px;width:1px;height:100px;background:#d4d4d4"></div>
<span class="t" style="left:1113.0px;top:298.1px;font:400 12px/1 'Liberation Sans','Noto Sans CJK SC',sans-serif;color:#8a8a8a;letter-spacing:-0.086px;">500000 ms</span>
<div class="b" style="left:1292px;top:290px;width:1px;height:100px;background:#d4d4d4"></div>
<span class="t" style="left:1230.7px;top:298.1px;font:400 12px/1 'Liberation Sans','Noto Sans CJK SC',sans-serif;color:#8a8a8a;letter-spacing:-0.086px;">550000 ms</span>
<div class="b" style="left:1409px;top:290px;width:1px;height:100px;background:#d4d4d4"></div>
<span class="t" style="left:1348.3px;top:298.1px;font:400 12px/1 'Liberation Sans','Noto Sans CJK SC',sans-serif;color:#8a8a8a;letter-spacing:-0.086px;">600000 ms</span>
<div class="b" style="left:1527px;top:290px;width:1px;height:100px;background:#d4d4d4"></div>
<span class="t" style="left:1466.0px;top:298.1px;font:400 12px/1 'Liberation Sans','Noto Sans CJK SC',sans-serif;color:#8a8a8a;letter-spacing:-0.086px;">650000 ms</span>
<div class="b" style="left:1645px;top:290px;width:1px;height:100px;background:#d4d4d4"></div>
<span class="t" style="left:1583.7px;top:298.1px;font:400 12px/1 'Liberation Sans','Noto Sans CJK SC',sans-serif;color:#8a8a8a;letter-spacing:-0.086px;">700000 ms</span>
<div class="b" style="left:1762px;top:290px;width:1px;height:100px;background:#d4d4d4"></div>
<span class="t" style="left:1701.3px;top:298.1px;font:400 12px/1 'Liberation Sans','Noto Sans CJK SC',sans-serif;color:#8a8a8a;letter-spacing:-0.086px;">750000 ms</span>
<div class="b" style="left:1880px;top:290px;width:1px;height:100px;background:#d4d4d4"></div>
<span class="t" style="left:1819.0px;top:298.1px;font:400 12px/1 'Liberation Sans','Noto Sans CJK SC',sans-serif;color:#8a8a8a;letter-spacing:-0.086px;">800000 ms</span>
<div class="b" style="left:497.5px;top:290px;width:5.5px;height:23px;background:#8c8c8c;border-radius:0 0 2px 2px"></div>
<div class="b" style="left:1.2px;top:334px;width:7px;height:13px;background:#1d72e8"></div>
<div class="b" style="left:3.6px;top:337px;width:2.4px;height:7px;background:#20b2c8"></div>
<div class="b" style="left:5px;top:321px;width:1.4px;height:1.6px;background:#bbb"></div>
<div class="b" style="left:5px;top:327px;width:2px;height:2px;background:#17a3c9"></div>
<div class="b" style="left:5px;top:330px;width:2px;height:2px;background:#17a3c9"></div>
<div class="b" style="left:5px;top:333px;width:2px;height:2px;background:#17a3c9"></div>
<div class="b" style="left:5px;top:336px;width:2px;height:2px;background:#17a3c9"></div>
<div class="b" style="left:5px;top:339px;width:2px;height:2px;background:#17a3c9"></div>
<div class="b" style="left:5px;top:342px;width:2px;height:2px;background:#17a3c9"></div>
<div class="b" style="left:5px;top:345px;width:2px;height:2px;background:#17a3c9"></div>
<div class="b" style="left:5px;top:348px;width:2px;height:2px;background:#17a3c9"></div>
<div class="b" style="left:5px;top:351px;width:2px;height:2px;background:#17a3c9"></div>
<div class="b" style="left:5px;top:354px;width:2px;height:2px;background:#17a3c9"></div>
<div class="b" style="left:5px;top:357px;width:2px;height:2px;background:#17a3c9"></div>
<div class="b" style="left:5px;top:360px;width:2px;height:2px;background:#17a3c9"></div>
<div class="b" style="left:5px;top:363px;width:2px;height:2px;background:#17a3c9"></div>
<div class="b" style="left:5px;top:366px;width:2px;height:2px;background:#17a3c9"></div>
<div class="b" style="left:5px;top:369px;width:2px;height:2px;background:#17a3c9"></div>
<div class="b" style="left:5px;top:372px;width:2px;height:2px;background:#17a3c9"></div>
<div class="b" style="left:13px;top:336px;width:2px;height:3px;background:#17a3c9"></div>
<div class="b" style="left:34px;top:373px;width:2px;height:3px;background:#17a3c9"></div>
<div class="b" style="left:175px;top:376px;width:2px;height:3px;background:#17a3c9"></div>
<div class="b" style="left:225px;top:380px;width:2px;height:3px;background:#17a3c9"></div>
<div class="b" style="left:317px;top:384px;width:2px;height:3px;background:#17a3c9"></div>
<div class="b" style="left:219.7px;top:323.5px;width:2.2px;height:2.5px;background:#17a3c9"></div>
<div class="b" style="left:218.2px;top:327px;width:5.2px;height:2.2px;background:#17a3c9"></div>
<div class="b" style="left:218.2px;top:330.6px;width:5.2px;height:2.6px;background:#17a3c9"></div>
<div class="b" style="left:458px;top:323px;width:3px;height:3px;background:#5a4fd0"></div>
<div class="b" style="left:459px;top:324px;width:1.5px;height:1.5px;background:#d04a7a"></div>
<div class="b" style="left:600px;top:327px;width:2px;height:3px;background:#62b4c6"></div>
<div class="b" style="left:740px;top:332px;width:2px;height:3px;background:#62b4c6"></div>
<div class="b" style="left:882px;top:335px;width:2px;height:3px;background:#62b4c6"></div>
<div class="b" style="left:888px;top:338px;width:2px;height:3px;background:#62b4c6"></div>
<div class="b" style="left:1023px;top:342px;width:2px;height:3px;background:#62b4c6"></div>
<div class="b" style="left:1164px;top:346px;width:2px;height:3px;background:#62b4c6"></div>
<div class="b" style="left:1306px;top:350px;width:2px;height:3px;background:#62b4c6"></div>
<div class="b" style="left:1447px;top:354px;width:2px;height:3px;background:#62b4c6"></div>
<div class="b" style="left:1588px;top:358px;width:2px;height:3px;background:#62b4c6"></div>
<div class="b" style="left:1730px;top:362px;width:2px;height:3px;background:#62b4c6"></div>
<div class="b" style="left:0px;top:390px;width:1888px;height:1px;background:#cbcbcb"></div>
<!-- p_left -->
<div class="b" style="left:0px;top:391px;width:580px;height:504px;background:#fff"></div>
<div class="b" style="left:0px;top:391px;width:580px;height:34px;background:#f3f3f3"></div>
<div class="b" style="left:0px;top:425px;width:580px;height:1px;background:#cdcdcd"></div>
<span class="t" style="left:2.9px;top:401.9px;font:400 15px/1 'Liberation Sans','Noto Sans CJK SC',sans-serif;color:#333;letter-spacing:0.015px;">Name</span>
<div class="clip" style="left:0;top:426px;width:559px;height:443px">
<div class="b" style="left:0px;top:0px;width:559px;height:26px;background:#eaeaea"></div>
<div class="b" style="left:5.5px;top:5.5px;width:14.5px;height:18.5px;background:#fff;border:1px solid #a9a9a9;box-shadow:.8px .8px 0 #c9c9c9"></div>
<span class="t" style="left:26.5px;top:6.3px;font:400 15px/1 'Liberation Sans','Noto Sans CJK SC',sans-serif;color:#3a3a3a;letter-spacing:0.015px;">HotelSearch?utm_medium=pc&amp;version_name</span>
<span class="t" style="left:332.3px;top:6.3px;font:400 15px/1 'Liberation Sans','Noto Sans CJK SC',sans-serif;color:#3a3a3a;letter-spacing:0.185px;">=999.9&amp;cateI</span>
<span class="t" style="left:421.2px;top:6.3px;font:400 15px/1 'Liberation Sans','Noto Sans CJK SC',sans-serif;color:#3a3a3a;letter-spacing:-1.125px;">...</span>
<span class="t" style="left:430.1px;top:6.3px;font:400 15px/1 'Liberation Sans','Noto Sans CJK SC',sans-serif;color:#3a3a3a;letter-spacing:-0.577px;">ZXvZ%2FucwNcK3z</span>
<span class="t" style="left:559.2px;top:6.3px;font:400 15px/1 'Liberation Sans','Noto Sans CJK SC',sans-serif;color:#3a3a3a;">x</span>
<div class="b" style="left:0px;top:26px;width:559px;height:26px;background:#fff"></div>
<div class="b" style="left:5.5px;top:31.5px;width:14.5px;height:18.5px;background:#fff;border:1px solid #a9a9a9;box-shadow:.8px .8px 0 #c9c9c9"></div>
<span class="t" style="left:26.5px;top:32.3px;font:400 15px/1 'Liberation Sans','Noto Sans CJK SC',sans-serif;color:#3a3a3a;letter-spacing:-0.131px;">service?utm_medium=pc&amp;version_name</span>
<span class="t" style="left:292.5px;top:32.3px;font:400 15px/1 'Liberation Sans','Noto Sans CJK SC',sans-serif;color:#3a3a3a;letter-spacing:0.589px;">=999.9&amp;poiId=</span>
<span class="t" style="left:396.6px;top:32.3px;font:400 15px/1 'Liberation Sans','Noto Sans CJK SC',sans-serif;color:#3a3a3a;letter-spacing:-0.736px;">471</span>
<span class="t" style="left:419.4px;top:32.3px;font:400 15px/1 'Liberation Sans','Noto Sans CJK SC',sans-serif;color:#3a3a3a;letter-spacing:-0.578px;">...</span>
<span class="t" style="left:430.1px;top:32.3px;font:400 15px/1 'Liberation Sans','Noto Sans CJK SC',sans-serif;color:#3a3a3a;letter-spacing:-0.515px;">jKqzSLkLQS7TI0Dp.</span>
<div class="b" style="left:0px;top:52px;width:559px;height:26px;background:#f5f5f5"></div>
<div class="b" style="left:5.5px;top:57.5px;width:14.5px;height:18.5px;background:#fff;border:1px solid #a9a9a9;box-shadow:.8px .8px 0 #c9c9c9"></div>
<span class="t" style="left:26.5px;top:58.3px;font:400 15px/1 'Liberation Sans','Noto Sans CJK SC',sans-serif;color:#3a3a3a;letter-spacing:-0.131px;">service?utm_medium=pc&amp;version_name</span>
<span class="t" style="left:292.5px;top:58.3px;font:400 15px/1 'Liberation Sans','Noto Sans CJK SC',sans-serif;color:#3a3a3a;letter-spacing:0.589px;">=999.9&amp;poiId=</span>
<span class="t" style="left:396.6px;top:58.3px;font:400 15px/1 'Liberation Sans','Noto Sans CJK SC',sans-serif;color:#3a3a3a;letter-spacing:-0.736px;">508</span>
<span class="t" style="left:419.4px;top:58.3px;font:400 15px/1 'Liberation Sans','Noto Sans CJK SC',sans-serif;color:#3a3a3a;letter-spacing:-0.578px;">...</span>
<span class="t" style="left:430.1px;top:58.3px;font:400 15px/1 'Liberation Sans','Noto Sans CJK SC',sans-serif;color:#3a3a3a;letter-spacing:-0.549px;">dkQ1X%2BMjJwBG.</span>
<div class="b" style="left:0px;top:78px;width:559px;height:26px;background:#fff"></div>
<div class="b" style="left:5.5px;top:83.5px;width:14.5px;height:18.5px;background:#fff;border:1px solid #a9a9a9;box-shadow:.8px .8px 0 #c9c9c9"></div>
<span class="t" style="left:26.5px;top:84.3px;font:400 15px/1 'Liberation Sans','Noto Sans CJK SC',sans-serif;color:#3a3a3a;letter-spacing:-0.131px;">service?utm_medium=pc&amp;version_name</span>
<span class="t" style="left:292.5px;top:84.3px;font:400 15px/1 'Liberation Sans','Noto Sans CJK SC',sans-serif;color:#3a3a3a;letter-spacing:0.589px;">=999.9&amp;poiId=</span>
<span class="t" style="left:396.6px;top:84.3px;font:400 15px/1 'Liberation Sans','Noto Sans CJK SC',sans-serif;color:#3a3a3a;letter-spacing:-0.736px;">130</span>
<span class="t" style="left:419.4px;top:84.3px;font:400 15px/1 'Liberation Sans','Noto Sans CJK SC',sans-serif;color:#3a3a3a;letter-spacing:-0.578px;">...</span>
<span class="t" style="left:430.1px;top:84.3px;font:400 15px/1 'Liberation Sans','Noto Sans CJK SC',sans-serif;color:#3a3a3a;letter-spacing:-0.834px;">%2FP0bFJm2ssBGF.</span>
<div class="b" style="left:0px;top:104px;width:559px;height:26px;background:#f5f5f5"></div>
<div class="b" style="left:5.5px;top:109.5px;width:14.5px;height:18.5px;background:#fff;border:1px solid #a9a9a9;box-shadow:.8px .8px 0 #c9c9c9"></div>
<span class="t" style="left:26.5px;top:110.3px;font:400 15px/1 'Liberation Sans','Noto Sans CJK SC',sans-serif;color:#3a3a3a;letter-spacing:-0.131px;">service?utm_medium=pc&amp;version_name</span>
<span class="t" style="left:292.5px;top:110.3px;font:400 15px/1 'Liberation Sans','Noto Sans CJK SC',sans-serif;color:#3a3a3a;letter-spacing:0.589px;">=999.9&amp;poiId=</span>
<span class="t" style="left:396.6px;top:110.3px;font:400 15px/1 'Liberation Sans','Noto Sans CJK SC',sans-serif;color:#3a3a3a;letter-spacing:-0.736px;">789</span>
<span class="t" style="left:419.4px;top:110.3px;font:400 15px/1 'Liberation Sans','Noto Sans CJK SC',sans-serif;color:#3a3a3a;letter-spacing:-0.578px;">...</span>
<span class="t" style="left:430.1px;top:110.3px;font:400 15px/1 'Liberation Sans','Noto Sans CJK SC',sans-serif;color:#3a3a3a;letter-spacing:-0.643px;">%2BwnyCgFKR%2B</span>
<div class="b" style="left:0px;top:130px;width:559px;height:26px;background:#fff"></div>
<div class="b" style="left:5.5px;top:135.5px;width:14.5px;height:18.5px;background:#fff;border:1px solid #a9a9a9;box-shadow:.8px .8px 0 #c9c9c9"></div>
<span class="t" style="left:26.5px;top:136.3px;font:400 15px/1 'Liberation Sans','Noto Sans CJK SC',sans-serif;color:#3a3a3a;letter-spacing:-0.131px;">service?utm_medium=pc&amp;version_name</span>
<span class="t" style="left:292.5px;top:136.3px;font:400 15px/1 'Liberation Sans','Noto Sans CJK SC',sans-serif;color:#3a3a3a;letter-spacing:0.589px;">=999.9&amp;poiId=</span>
<span class="t" style="left:396.6px;top:136.3px;font:400 15px/1 'Liberation Sans','Noto Sans CJK SC',sans-serif;color:#3a3a3a;letter-spacing:-0.736px;">503</span>
<span class="t" style="left:419.4px;top:136.3px;font:400 15px/1 'Liberation Sans','Noto Sans CJK SC',sans-serif;color:#3a3a3a;letter-spacing:-0.578px;">...</span>
<span class="t" style="left:430.1px;top:136.3px;font:400 15px/1 'Liberation Sans','Noto Sans CJK SC',sans-serif;color:#3a3a3a;letter-spacing:-0.513px;">DyuJIAb9IkJEOiKEh</span>
<div class="b" style="left:0px;top:156px;width:559px;height:26px;background:#f5f5f5"></div>
<div class="b" style="left:5.5px;top:161.5px;width:14.5px;height:18.5px;background:#fff;border:1px solid #a9a9a9;box-shadow:.8px .8px 0 #c9c9c9"></div>
<span class="t" style="left:26.5px;top:162.3px;font:400 15px/1 'Liberation Sans','Noto Sans CJK SC',sans-serif;color:#3a3a3a;letter-spacing:-0.131px;">service?utm_medium=pc&amp;version_name</span>
<span class="t" style="left:292.5px;top:162.3px;font:400 15px/1 'Liberation Sans','Noto Sans CJK SC',sans-serif;color:#3a3a3a;letter-spacing:0.589px;">=999.9&amp;poiId=</span>
<span class="t" style="left:396.6px;top:162.3px;font:400 15px/1 'Liberation Sans','Noto Sans CJK SC',sans-serif;color:#3a3a3a;letter-spacing:-0.736px;">253</span>
<span class="t" style="left:419.4px;top:162.3px;font:400 15px/1 'Liberation Sans','Noto Sans CJK SC',sans-serif;color:#3a3a3a;letter-spacing:-0.578px;">...</span>
<span class="t" style="left:430.1px;top:162.3px;font:400 15px/1 'Liberation Sans','Noto Sans CJK SC',sans-serif;color:#3a3a3a;letter-spacing:-0.261px;">BNtrcd5%2FjisjTHP</span>
<div class="b" style="left:0px;top:182px;width:559px;height:26px;background:#fff"></div>
<div class="b" style="left:5.5px;top:187.5px;width:14.5px;height:18.5px;background:#fff;border:1px solid #a9a9a9;box-shadow:.8px .8px 0 #c9c9c9"></div>
<span class="t" style="left:26.5px;top:188.3px;font:400 15px/1 'Liberation Sans','Noto Sans CJK SC',sans-serif;color:#3a3a3a;letter-spacing:-0.131px;">service?utm_medium=pc&amp;version_name</span>
<span class="t" style="left:292.5px;top:188.3px;font:400 15px/1 'Liberation Sans','Noto Sans CJK SC',sans-serif;color:#3a3a3a;letter-spacing:0.589px;">=999.9&amp;poiId=</span>
<span class="t" style="left:396.6px;top:188.3px;font:400 15px/1 'Liberation Sans','Noto Sans CJK SC',sans-serif;color:#3a3a3a;letter-spacing:-0.736px;">148</span>
<span class="t" style="left:419.4px;top:188.3px;font:400 15px/1 'Liberation Sans','Noto Sans CJK SC',sans-serif;color:#3a3a3a;letter-spacing:-0.578px;">...</span>
<span class="t" style="left:430.1px;top:188.3px;font:400 15px/1 'Liberation Sans','Noto Sans CJK SC',sans-serif;color:#3a3a3a;letter-spacing:-0.722px;">7Bga7P%2FK8YVnL</span>
<div class="b" style="left:0px;top:208px;width:559px;height:26px;background:#f5f5f5"></div>
<div class="b" style="left:5.5px;top:213.5px;width:14.5px;height:18.5px;background:#fff;border:1px solid #a9a9a9;box-shadow:.8px .8px 0 #c9c9c9"></div>
<span class="t" style="left:26.5px;top:214.3px;font:400 15px/1 'Liberation Sans','Noto Sans CJK SC',sans-serif;color:#3a3a3a;letter-spacing:-0.131px;">service?utm_medium=pc&amp;version_name</span>
<span class="t" style="left:292.5px;top:214.3px;font:400 15px/1 'Liberation Sans','Noto Sans CJK SC',sans-serif;color:#3a3a3a;letter-spacing:0.589px;">=999.9&amp;poiId=</span>
<span class="t" style="left:396.6px;top:214.3px;font:400 15px/1 'Liberation Sans','Noto Sans CJK SC',sans-serif;color:#3a3a3a;letter-spacing:-0.736px;">445</span>
<span class="t" style="left:419.4px;top:214.3px;font:400 15px/1 'Liberation Sans','Noto Sans CJK SC',sans-serif;color:#3a3a3a;letter-spacing:-0.578px;">...</span>
<span class="t" style="left:430.1px;top:214.3px;font:400 15px/1 'Liberation Sans','Noto Sans CJK SC',sans-serif;color:#3a3a3a;letter-spacing:-0.278px;">Lu9evwZEiiLfn2uv4.</span>
<div class="b" style="left:0px;top:234px;width:559px;height:26px;background:#fff"></div>
<div class="b" style="left:5.5px;top:239.5px;width:14.5px;height:18.5px;background:#fff;border:1px solid #a9a9a9;box-shadow:.8px .8px 0 #c9c9c9"></div>
<span class="t" style="left:26.5px;top:240.3px;font:400 15px/1 'Liberation Sans','Noto Sans CJK SC',sans-serif;color:#3a3a3a;letter-spacing:-0.131px;">service?utm_medium=pc&amp;version_name</span>
<span class="t" style="left:292.5px;top:240.3px;font:400 15px/1 'Liberation Sans','Noto Sans CJK SC',sans-serif;color:#3a3a3a;letter-spacing:0.589px;">=999.9&amp;poiId=</span>
<span class="t" style="left:396.6px;top:240.3px;font:400 15px/1 'Liberation Sans','Noto Sans CJK SC',sans-serif;color:#3a3a3a;letter-spacing:-0.736px;">840</span>
<span class="t" style="left:419.4px;top:240.3px;font:400 15px/1 'Liberation Sans','Noto Sans CJK SC',sans-serif;color:#3a3a3a;letter-spacing:-0.578px;">...</span>
<span class="t" style="left:430.1px;top:240.3px;font:400 15px/1 'Liberation Sans','Noto Sans CJK SC',sans-serif;color:#3a3a3a;letter-spacing:-0.278px;">Lu9evwZEiiLfn2uv4.</span>
<div class="b" style="left:0px;top:260px;width:559px;height:26px;background:#f5f5f5"></div>
<div class="b" style="left:5.5px;top:265.5px;width:14.5px;height:18.5px;background:#fff;border:1px solid #a9a9a9;box-shadow:.8px .8px 0 #c9c9c9"></div>
<span class="t" style="left:26.5px;top:266.3px;font:400 15px/1 'Liberation Sans','Noto Sans CJK SC',sans-serif;color:#3a3a3a;letter-spacing:-0.131px;">service?utm_medium=pc&amp;version_name</span>
<span class="t" style="left:292.5px;top:266.3px;font:400 15px/1 'Liberation Sans','Noto Sans CJK SC',sans-serif;color:#3a3a3a;letter-spacing:0.589px;">=999.9&amp;poiId=</span>
<span class="t" style="left:396.6px;top:266.3px;font:400 15px/1 'Liberation Sans','Noto Sans CJK SC',sans-serif;color:#3a3a3a;letter-spacing:-0.736px;">730</span>
<span class="t" style="left:419.4px;top:266.3px;font:400 15px/1 'Liberation Sans','Noto Sans CJK SC',sans-serif;color:#3a3a3a;letter-spacing:-0.578px;">...</span>
<span class="t" style="left:430.1px;top:266.3px;font:400 15px/1 'Liberation Sans','Noto Sans CJK SC',sans-serif;color:#3a3a3a;letter-spacing:-0.494px;">vZxkJCbQiudiYAFnS</span>
<div class="b" style="left:0px;top:286px;width:559px;height:26px;background:#fff"></div>
<div class="b" style="left:5.5px;top:291.5px;width:14.5px;height:18.5px;background:#fff;border:1px solid #a9a9a9;box-shadow:.8px .8px 0 #c9c9c9"></div>
<span class="t" style="left:26.5px;top:292.3px;font:400 15px/1 'Liberation Sans','Noto Sans CJK SC',sans-serif;color:#3a3a3a;letter-spacing:-0.131px;">service?utm_medium=pc&amp;version_name</span>
<span class="t" style="left:292.5px;top:292.3px;font:400 15px/1 'Liberation Sans','Noto Sans CJK SC',sans-serif;color:#3a3a3a;letter-spacing:0.589px;">=999.9&amp;poiId=</span>
<span class="t" style="left:396.6px;top:292.3px;font:400 15px/1 'Liberation Sans','Noto Sans CJK SC',sans-serif;color:#3a3a3a;letter-spacing:-0.736px;">547</span>
<span class="t" style="left:419.4px;top:292.3px;font:400 15px/1 'Liberation Sans','Noto Sans CJK SC',sans-serif;color:#3a3a3a;letter-spacing:-0.578px;">...</span>
<span class="t" style="left:430.1px;top:292.3px;font:400 15px/1 'Liberation Sans','Noto Sans CJK SC',sans-serif;color:#3a3a3a;letter-spacing:-0.512px;">YMkksB54TmHxy3E</span>
<div class="b" style="left:0px;top:312px;width:559px;height:26px;background:#f5f5f5"></div>
<div class="b" style="left:5.5px;top:317.5px;width:14.5px;height:18.5px;background:#fff;border:1px solid #a9a9a9;box-shadow:.8px .8px 0 #c9c9c9"></div>
<span class="t" style="left:26.5px;top:318.3px;font:400 15px/1 'Liberation Sans','Noto Sans CJK SC',sans-serif;color:#3a3a3a;letter-spacing:-0.131px;">service?utm_medium=pc&amp;version_name</span>
<span class="t" style="left:292.5px;top:318.3px;font:400 15px/1 'Liberation Sans','Noto Sans CJK SC',sans-serif;color:#3a3a3a;letter-spacing:0.589px;">=999.9&amp;poiId=</span>
<span class="t" style="left:396.6px;top:318.3px;font:400 15px/1 'Liberation Sans','Noto Sans CJK SC',sans-serif;color:#3a3a3a;letter-spacing:-0.736px;">744</span>
<span class="t" style="left:419.4px;top:318.3px;font:400 15px/1 'Liberation Sans','Noto Sans CJK SC',sans-serif;color:#3a3a3a;letter-spacing:-0.578px;">...</span>
<span class="t" style="left:430.1px;top:318.3px;font:400 15px/1 'Liberation Sans','Noto Sans CJK SC',sans-serif;color:#3a3a3a;letter-spacing:-0.334px;">IMC9fvm%2FiEdn0T</span>
<div class="b" style="left:0px;top:338px;width:559px;height:26px;background:#fff"></div>
<div class="b" style="left:5.5px;top:343.5px;width:14.5px;height:18.5px;background:#fff;border:1px solid #a9a9a9;box-shadow:.8px .8px 0 #c9c9c9"></div>
<span class="t" style="left:26.5px;top:344.3px;font:400 15px/1 'Liberation Sans','Noto Sans CJK SC',sans-serif;color:#3a3a3a;letter-spacing:-0.131px;">service?utm_medium=pc&amp;version_name</span>
<span class="t" style="left:292.5px;top:344.3px;font:400 15px/1 'Liberation Sans','Noto Sans CJK SC',sans-serif;color:#3a3a3a;letter-spacing:0.589px;">=999.9&amp;poiId=</span>
<span class="t" style="left:396.6px;top:344.3px;font:400 15px/1 'Liberation Sans','Noto Sans CJK SC',sans-serif;color:#3a3a3a;letter-spacing:-0.736px;">180</span>
<span class="t" style="left:419.4px;top:344.3px;font:400 15px/1 'Liberation Sans','Noto Sans CJK SC',sans-serif;color:#3a3a3a;letter-spacing:-0.578px;">...</span>
<span class="t" style="left:430.1px;top:344.3px;font:400 15px/1 'Liberation Sans','Noto Sans CJK SC',sans-serif;color:#3a3a3a;letter-spacing:-0.350px;">xP%2FoKdGZpcmy.</span>
<div class="b" style="left:0px;top:364px;width:559px;height:26px;background:#f5f5f5"></div>
<div class="b" style="left:5.5px;top:369.5px;width:14.5px;height:18.5px;background:#fff;border:1px solid #a9a9a9;box-shadow:.8px .8px 0 #c9c9c9"></div>
<span class="t" style="left:26.5px;top:370.3px;font:400 15px/1 'Liberation Sans','Noto Sans CJK SC',sans-serif;color:#3a3a3a;letter-spacing:-0.131px;">service?utm_medium=pc&amp;version_name</span>
<span class="t" style="left:292.5px;top:370.3px;font:400 15px/1 'Liberation Sans','Noto Sans CJK SC',sans-serif;color:#3a3a3a;letter-spacing:0.589px;">=999.9&amp;poiId=</span>
<span class="t" style="left:396.6px;top:370.3px;font:400 15px/1 'Liberation Sans','Noto Sans CJK SC',sans-serif;color:#3a3a3a;letter-spacing:-0.736px;">423</span>
<span class="t" style="left:419.4px;top:370.3px;font:400 15px/1 'Liberation Sans','Noto Sans CJK SC',sans-serif;color:#3a3a3a;letter-spacing:-0.578px;">...</span>
<span class="t" style="left:430.1px;top:370.3px;font:400 15px/1 'Liberation Sans','Noto Sans CJK SC',sans-serif;color:#3a3a3a;letter-spacing:-0.325px;">IKH3kQazPz1pcG0.</span>
<div class="b" style="left:0px;top:390px;width:559px;height:26px;background:#fff"></div>
<div class="b" style="left:5.5px;top:395.5px;width:14.5px;height:18.5px;background:#fff;border:1px solid #a9a9a9;box-shadow:.8px .8px 0 #c9c9c9"></div>
<span class="t" style="left:26.5px;top:396.3px;font:400 15px/1 'Liberation Sans','Noto Sans CJK SC',sans-serif;color:#3a3a3a;letter-spacing:-0.131px;">service?utm_medium=pc&amp;version_name</span>
<span class="t" style="left:292.5px;top:396.3px;font:400 15px/1 'Liberation Sans','Noto Sans CJK SC',sans-serif;color:#3a3a3a;letter-spacing:0.589px;">=999.9&amp;poiId=</span>
<span class="t" style="left:396.6px;top:396.3px;font:400 15px/1 'Liberation Sans','Noto Sans CJK SC',sans-serif;color:#3a3a3a;letter-spacing:-0.736px;">179</span>
<span class="t" style="left:419.4px;top:396.3px;font:400 15px/1 'Liberation Sans','Noto Sans CJK SC',sans-serif;color:#3a3a3a;letter-spacing:-0.578px;">...</span>
<span class="t" style="left:430.1px;top:396.3px;font:400 15px/1 'Liberation Sans','Noto Sans CJK SC',sans-serif;color:#3a3a3a;letter-spacing:0.148px;">57M8VVA2b3fiUW.</span>
<div class="b" style="left:0px;top:416px;width:559px;height:26px;background:#f5f5f5"></div>
<div class="b" style="left:5.5px;top:421.5px;width:14.5px;height:18.5px;background:#fff;border:1px solid #a9a9a9;box-shadow:.8px .8px 0 #c9c9c9"></div>
<span class="t" style="left:26.5px;top:422.3px;font:400 15px/1 'Liberation Sans','Noto Sans CJK SC',sans-serif;color:#3a3a3a;letter-spacing:-0.131px;">service?utm_medium=pc&amp;version_name</span>
<span class="t" style="left:292.5px;top:422.3px;font:400 15px/1 'Liberation Sans','Noto Sans CJK SC',sans-serif;color:#3a3a3a;letter-spacing:0.589px;">=999.9&amp;poiId=</span>
<span class="t" style="left:396.6px;top:422.3px;font:400 15px/1 'Liberation Sans','Noto Sans CJK SC',sans-serif;color:#3a3a3a;letter-spacing:-0.736px;">190</span>
<span class="t" style="left:419.4px;top:422.3px;font:400 15px/1 'Liberation Sans','Noto Sans CJK SC',sans-serif;color:#3a3a3a;letter-spacing:-0.578px;">...</span>
<span class="t" style="left:430.1px;top:422.3px;font:400 15px/1 'Liberation Sans','Noto Sans CJK SC',sans-serif;color:#3a3a3a;letter-spacing:-0.504px;">Ci9R5WB27mCSBv.</span>
</div>
<div class="b" style="left:559px;top:426px;width:21px;height:443px;background:#f1f1f1"></div>
<div class="b" style="left:561px;top:447px;width:17px;height:274px;background:#c1c1c1"></div>
<svg style="left:565px;top:435px" width="9" height="5" viewBox="0 0 9 5"><path d="M0 5L4.500 0 9 5z" fill="#c3c3c3"/></svg>
<svg style="left:565.500px;top:856.500px" width="8" height="4.500" viewBox="0 0 8 4.500"><path d="M0 0h8L4 4.500z" fill="#505050"/></svg>
<div class="b" style="left:0px;top:869px;width:580px;height:26px;background:#f3f3f3;border-top:1px solid #cdcdcd"></div>
<span class="t" style="left:10.1px;top:880.3px;font:400 15px/1 'Liberation Sans','Noto Sans CJK SC',sans-serif;color:#5f5f5f;letter-spacing:0.019px;">25 / 91 requests</span>
<div class="b" style="left:129px;top:874px;width:1px;height:21px;background:#cdcdcd"></div>
<span class="t" style="left:140.6px;top:880.3px;font:400 15px/1 'Liberation Sans','Noto Sans CJK SC',sans-serif;color:#5f5f5f;letter-spacing:-0.116px;">91.7 kB / 782 kB transferred</span>
<div class="b" style="left:335px;top:874px;width:1px;height:21px;background:#cdcdcd"></div>
<span class="t" style="left:347.1px;top:880.3px;font:400 15px/1 'Liberation Sans','Noto Sans CJK SC',sans-serif;color:#5f5f5f;letter-spacing:-0.183px;">302 kB / 1.1 MB resources</span>
<div class="b" style="left:580px;top:391px;width:2px;height:504px;background:#cdcdcd"></div>
<!-- p_right -->
<div class="b" style="left:582px;top:391px;width:1306px;height:504px;background:#fff"></div>
<div class="b" style="left:582px;top:391px;width:1306px;height:34px;background:#f3f3f3;border-bottom:1px solid #cdcdcd"></div>
<svg style="left:593.500px;top:402.300px" width="9" height="9" viewBox="0 0 9 9" stroke="#5a5a5a" stroke-width="1.500" fill="none"><path d="M.5.5l8 8M8.500.5l-8 8"/></svg>
<span class="t" style="left:623.7px;top:401.3px;font:400 15px/1 'Liberation Sans','Noto Sans CJK SC',sans-serif;color:#333;letter-spacing:-0.207px;">Headers</span>
<span class="t" style="left:702.1px;top:401.3px;font:400 15px/1 'Liberation Sans','Noto Sans CJK SC',sans-serif;color:#5a5a5a;letter-spacing:-0.167px;">Preview</span>
<span class="t" style="left:777.1px;top:401.3px;font:400 15px/1 'Liberation Sans','Noto Sans CJK SC',sans-serif;color:#5a5a5a;letter-spacing:-0.455px;">Response</span>
<span class="t" style="left:864.1px;top:401.3px;font:400 15px/1 'Liberation Sans','Noto Sans CJK SC',sans-serif;color:#5a5a5a;letter-spacing:0.520px;">Initiator</span>
<span class="t" style="left:940.1px;top:401.3px;font:400 15px/1 'Liberation Sans','Noto Sans CJK SC',sans-serif;color:#5a5a5a;letter-spacing:0.581px;">Timing</span>
<span class="t" style="left:1010.1px;top:401.3px;font:400 15px/1 'Liberation Sans','Noto Sans CJK SC',sans-serif;color:#5a5a5a;letter-spacing:-0.057px;">Cookies</span>
<div class="b" style="left:612px;top:423px;width:79px;height:2px;background:#1a73e8"></div>
<div class="b" style="left:582px;top:428px;width:1306px;height:32px;background:#dadada"></div>
<svg style="left:589px;top:440.8px" width="9.500" height="6.500" viewBox="0 0 9.500 6.500"><path d="M0 0h9.500L4.750 6.500z" fill="#6e6e6e"/></svg>
<span class="t" style="left:601.7px;top:436.0px;font:700 15px/1 'Liberation Sans','Noto Sans CJK SC',sans-serif;color:#545454;letter-spacing:-0.186px;">General</span>
<div class="clip" style="left:600px;top:455px;width:1288px;height:115px">
<span class="t" style="left:12.9px;top:11.2px;font:700 15px/1 'Liberation Sans','Noto Sans CJK SC',sans-serif;color:#5a5a5a;letter-spacing:-0.465px;">Request URL:</span>
<span class="t" style="left:114.3px;top:14.0px;font:400 13.75px/1 'Liberation Mono','Noto Sans CJK SC',monospace;color:#363636;">https://ihotel.meituan.com/hbsearch/HotelSearch?utm_medium=pc&amp;version_name=999.9&amp;cateId=20&amp;attr_28=129&amp;uuid=5D4E443EC83DDD49B73F317921EAE16C7B4</span>
<span class="t" style="left:13.8px;top:40.2px;font:400 13.75px/1 'Liberation Mono','Noto Sans CJK SC',monospace;color:#363636;">92A634A67FA261773890F730A5932%401600263777783&amp;cityId=59&amp;offset=20&amp;limit=20&amp;startDay=20200916&amp;endDay=20200916&amp;q=&amp;sort=defaults&amp;X-FOR-WITH=47zbBAV%2Bk1e7QrnK</span>
<span class="t" style="left:13.8px;top:66.4px;font:400 13.75px/1 'Liberation Mono','Noto Sans CJK SC',monospace;color:#363636;">t4lEVXrmtOE9w2OpFfGsKf539CDdXIw4r2V%2FqICcWVeNACGHWNbD6iL4huPyRVdkNJJwR6dqcoQMyzjUE3cQGWr6YZOwANQOlCSrZ7m1%2Baahwcnh%2FdTfaJLMZfxWaJQEISBuKbiMgDC8Vr4eaeWiY</span>
<span class="t" style="left:13.8px;top:92.6px;font:400 13.75px/1 'Liberation Mono','Noto Sans CJK SC',monospace;color:#363636;">ASkLl0ByB96MOUz7gfjUTbhlV0ZXvZ%2FucwNcK3zxTQjmoBINsAY4HwpKQLpOV2IqV1CtPg%3D</span>
</div>
<span class="t" style="left:612.9px;top:571.7px;font:700 15px/1 'Liberation Sans','Noto Sans CJK SC',sans-serif;color:#5a5a5a;letter-spacing:-0.015px;">Request Method:</span>
<span class="t" style="left:741.2px;top:574.5px;font:400 13.75px/1 'Liberation Mono','Noto Sans CJK SC',monospace;color:#363636;">GET</span>
<span class="t" style="left:612.9px;top:598.8px;font:700 15px/1 'Liberation Sans','Noto Sans CJK SC',sans-serif;color:#5a5a5a;letter-spacing:-0.360px;">Status Code:</span>
<span class="t" style="left:727.0px;top:601.6px;font:400 13.75px/1 'Liberation Mono','Noto Sans CJK SC',monospace;color:#363636;">200 OK</span>
<div class="b" style="left:708.6px;top:599.1px;width:12.6px;height:12.6px;border-radius:50%;background:radial-gradient(circle at 48% 22%,#d8ffd2 0,#6fe868 18%,#1fc41f 45%,#0a9a0a 80%,#0a8a0a 100%)"></div>
<span class="t" style="left:612.9px;top:625.8px;font:700 15px/1 'Liberation Sans','Noto Sans CJK SC',sans-serif;color:#5a5a5a;letter-spacing:-0.277px;">Remote Address:</span>
<span class="t" style="left:740.3px;top:628.6px;font:400 13.75px/1 'Liberation Mono','Noto Sans CJK SC',monospace;color:#363636;">103.37.142.168:443</span>
<span class="t" style="left:612.9px;top:652.7px;font:700 15px/1 'Liberation Sans','Noto Sans CJK SC',sans-serif;color:#5a5a5a;letter-spacing:-0.231px;">Referrer Policy:</span>
<span class="t" style="left:728.7px;top:655.5px;font:400 13.75px/1 'Liberation Mono','Noto Sans CJK SC',monospace;color:#363636;">no-referrer-when-downgrade</span>
<div class="b" style="left:582px;top:681px;width:1306px;height:1px;background:#e0e0e0"></div>
<svg style="left:589.2px;top:696px" width="9.500" height="6.500" viewBox="0 0 9.500 6.500"><path d="M0 0h9.500L4.750 6.500z" fill="#6e6e6e"/></svg>
<span class="t" style="left:601.7px;top:690.7px;font:700 15px/1 'Liberation Sans','Noto Sans CJK SC',sans-serif;color:#5a5a5a;letter-spacing:-0.373px;">Response Headers</span>
<span class="t" style="left:767.1px;top:690.7px;font:400 15px/1 'Liberation Sans','Noto Sans CJK SC',sans-serif;color:#8a8a8a;letter-spacing:-0.074px;">view source</span>
<span class="t" style="left:612.9px;top:721.3px;font:700 15px/1 'Liberation Sans','Noto Sans CJK SC',sans-serif;color:#5a5a5a;letter-spacing:-0.187px;">Access-Control-Allow-Credentials:</span>
<span class="t" style="left:861.8px;top:724.1px;font:400 13.75px/1 'Liberation Mono','Noto Sans CJK SC',monospace;color:#363636;">true</span>
<span class="t" style="left:612.9px;top:748.5px;font:700 15px/1 'Liberation Sans','Noto Sans CJK SC',sans-serif;color:#5a5a5a;letter-spacing:-0.178px;">Access-Control-Allow-Headers:</span>
<span class="t" style="left:840.0px;top:751.3px;font:400 13.75px/1 'Liberation Mono','Noto Sans CJK SC',monospace;color:#363636;">Origin, Content-Type, Accept, __skcy</span>
<span class="t" style="left:612.9px;top:775.7px;font:700 15px/1 'Liberation Sans','Noto Sans CJK SC',sans-serif;color:#5a5a5a;letter-spacing:-0.106px;">Access-Control-Allow-Methods:</span>
<span class="t" style="left:845.0px;top:778.5px;font:400 13.75px/1 'Liberation Mono','Noto Sans CJK SC',monospace;color:#363636;">POST,GET,PUT,PATCH,DELETE,OPTIONS</span>
<span class="t" style="left:612.9px;top:802.9px;font:700 15px/1 'Liberation Sans','Noto Sans CJK SC',sans-serif;color:#5a5a5a;letter-spacing:-0.109px;">Access-Control-Allow-Origin:</span>
<span class="t" style="left:827.0px;top:805.7px;font:400 13.75px/1 'Liberation Mono','Noto Sans CJK SC',monospace;color:#363636;">https://hotel.meituan.com</span>
<span class="t" style="left:612.9px;top:830.1px;font:700 15px/1 'Liberation Sans','Noto Sans CJK SC',sans-serif;color:#5a5a5a;letter-spacing:-0.105px;">Access-Control-Max-Age:</span>
<span class="t" style="left:801.0px;top:832.9px;font:400 13.75px/1 'Liberation Mono','Noto Sans CJK SC',monospace;color:#363636;">1728000</span>
<span class="t" style="left:612.9px;top:857.3px;font:700 15px/1 'Liberation Sans','Noto Sans CJK SC',sans-serif;color:#5a5a5a;letter-spacing:-0.194px;">Connection:</span>
<span class="t" style="left:705.5px;top:860.1px;font:400 13.75px/1 'Liberation Mono','Noto Sans CJK SC',monospace;color:#363636;">keep-alive</span>
<span class="t" style="left:612.9px;top:884.5px;font:700 15px/1 'Liberation Sans','Noto Sans CJK SC',sans-serif;color:#5a5a5a;letter-spacing:-0.183px;">Content-Encoding:</span>
<span class="t" style="left:752.5px;top:887.3px;font:400 13.75px/1 'Liberation Mono','Noto Sans CJK SC',monospace;color:#363636;">gzip</span>
<!-- p_annot -->
<svg style="left:0;top:0" width="1888" height="895" viewBox="0 0 1888 895">
<polygon points="458.6,355.7 284.9,410.6 283.6,406.6 270.4,419.5 288.7,421.8 287.3,417.8 459.0,356.7" fill="#f93636"/>
<polygon points="1335.7,384.8 1383.2,456.6 1379.6,459.1 1395.7,467.5 1392.9,449.6 1389.3,452.1 1336.5,384.2" fill="#f93636"/>
<polygon points="1357.2,691.5 1084.4,579.7 1085.9,576.1 1067.1,577.3 1080.0,591.0 1081.4,587.4 1356.8,692.5" fill="#f93636"/>
<rect x="386.500" y="256.500" width="41" height="33.500" fill="none" stroke="#ee3b3b" stroke-width="1.200"/>
<rect x="709.500" y="457.500" width="392" height="29.500" fill="none" stroke="#ee3b3b" stroke-width="1.200"/>
</svg>
<span class="t" style="left:1669.0px;top:869.9px;font:400 15.5px/1 'Liberation Sans','Noto Sans CJK SC',sans-serif;color:#d6d6d6;letter-spacing:0.133px;text-shadow:0 0 1px #fff,0 0 2px #f0f0f0;">https://blog.csdn.net/fyfugoyfa</span>
</body></html>
